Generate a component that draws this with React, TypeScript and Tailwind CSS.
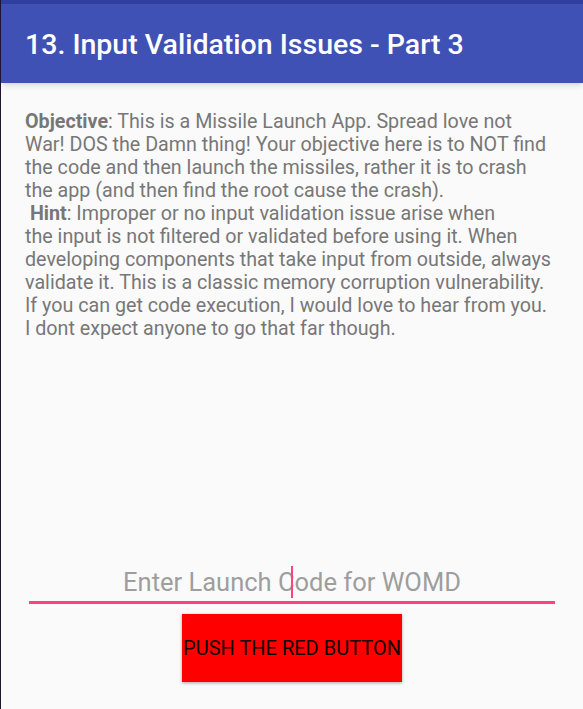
const lines: React.ReactNode[] = [
  <><span className="font-bold">Objective</span>: This is a Missile Launch App. Spread love not</>,
  'War! DOS the Damn thing! Your objective here is to NOT find',
  'the code and then launch the missiles, rather it is to crash',
  'the app (and then find the root cause the crash).',
  <>&nbsp;<span className="font-bold">Hint</span>: Improper or no input validation issue arise when</>,
  'the input is not filtered or validated before using it. When',
  'developing components that take input from outside, always',
  'validate it. This is a classic memory corruption vulnerability.',
  'If you can get code execution, I would love to hear from you.',
  'I dont expect anyone to go that far though.',
];

function App() {
  return (
    <div className="h-[709px] w-full flex flex-col bg-[#fafafa] border-l border-[#1e1631] font-['Roboto',sans-serif] overflow-hidden">
      <div className="h-[4px] bg-[#303f9f]" />
      <header className="h-[79px] bg-[#3f51b5] flex items-center px-6 pt-[3px] shadow-md z-10">
        <h1 className="text-white text-[28.5px] font-medium">13. Input Validation Issues - Part 3</h1>
      </header>

      <main className="flex-1 px-6 pt-[27px] text-[19.7px] leading-[23px] text-[#777777]">
        {lines.map((line, i) => (
          <div key={i} className="whitespace-nowrap">
            {line}
          </div>
        ))}
      </main>

      <div className="px-[28px]">
        <div className="relative h-[40px] border-b-[3px] border-[#ff4081] flex items-center justify-center text-[25.5px] text-[#9e9e9e]">
          Enter Launch Code for WOMD
          <span className="absolute left-[262px] top-[2px] h-[32px] w-[2px] bg-[#ff4081]" />
        </div>
      </div>

      <div className="flex justify-center mt-[10px] mb-[27px]">
        <button className="w-[220px] h-[68px] bg-[#ff0000] text-[#140000] text-[20px] uppercase whitespace-nowrap shadow-[0_1px_3px_rgba(0,0,0,0.35)]">
          Push the red button
        </button>
      </div>
    </div>
  );
}

export default App;
